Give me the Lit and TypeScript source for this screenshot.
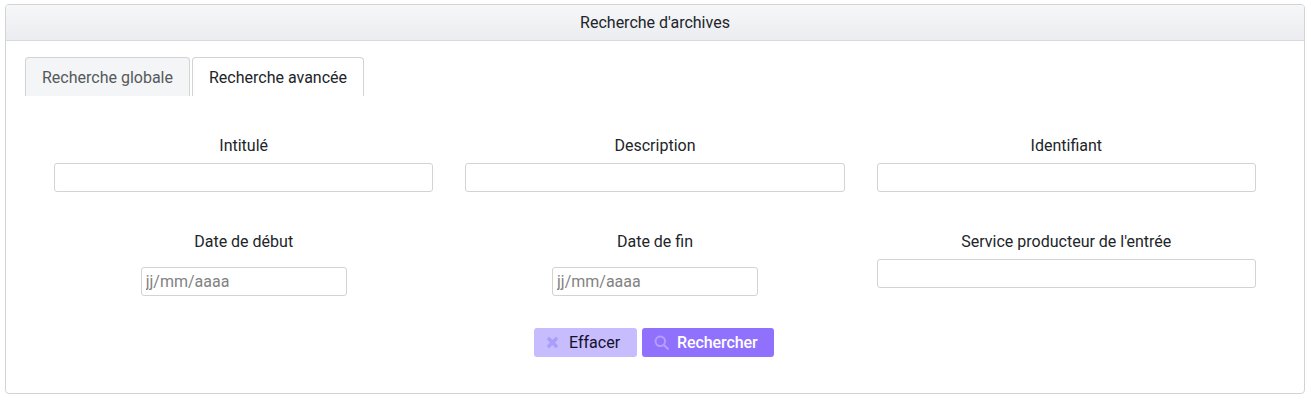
import { LitElement, html, css } from "lit";
import { customElement } from "lit/decorators.js";

@customElement("app-root")
export class AppRoot extends LitElement {
  static styles = css`
    :host { display: block; font-family: Roboto, "Liberation Sans", sans-serif; color: #212529; font-size: 16px; }
    * { box-sizing: border-box; }
    .page { padding: 4px 6px 7px 5px; height: 401px; }
    .panel { height: 390px; border: 1px solid #d3d3d3; border-radius: 4px; background: #fff; }
    .head { height: 36px; border-bottom: 1px solid #d9d9dc; background: linear-gradient(#f6f7f9, #ebecef); display: flex; align-items: center; justify-content: center; font-size: 16px; border-radius: 3px 3px 0 0; }
    .body { padding: 16px 19px 0; }
    .tabs { display: flex; gap: 2px; height: 39px; }
    .tab { height: 39px; border: 1px solid #d3d3d3; border-bottom: 0; border-radius: 4px 4px 0 0; display: flex; align-items: center; justify-content: center; font-size: 16px; }
    .tab.off { width: 165px; background: #f4f5f7; color: #55595c; }
    .tab.on { width: 172px; background: #fff; color: #212529; }
    .form { margin: 0 13px; }
    .row { display: grid; grid-template-columns: repeat(3, 1fr); }
    .r1 { padding-top: 39px; height: 134px; }
    .r2 { height: 98px; padding-top: 1px; }
    .cell { padding: 0 16px; display: flex; flex-direction: column; align-items: center; }
    label { display: block; font-size: 16px; line-height: 22px; height: 22px; text-align: center; }
    input { display: block; font: inherit; margin: 0; outline: 0; border: 1px solid #d3d3d3; border-radius: 3px; background: #fff; height: 29px; }
    .text { width: 100%; margin-top: 6px; }
    .date { width: 206px; margin-top: 14px; padding: 0 3px 0 4px; font-size: 16px; color: #828282; }
    .date::placeholder { color: #828282; opacity: 1; }
    .actions { display: flex; justify-content: center; gap: 5px; padding-right: 2px; }
    .btn { height: 29px; border: 0; border-radius: 3px; display: flex; align-items: center; font: inherit; font-size: 16px; padding: 0; }
    .clear { width: 103px; background: #c6bcfe; color: #14112a; padding-left: 13px; }
    .go { width: 132px; background: #8f71fe; color: #fff; font-weight: 500; padding-left: 12px; letter-spacing: -0.08px; }
    .clear svg { margin-right: 11px; }
    .go svg { margin-right: 8px; }
  `;

  render() {
    return html`
      <div class="page">
        <section class="panel">
          <header class="head">Recherche d'archives</header>
          <div class="body">
            <nav class="tabs">
              <div class="tab off">Recherche globale</div>
              <div class="tab on">Recherche avancée</div>
            </nav>
            <form class="form" @submit=${(e: Event) => e.preventDefault()}>
              <div class="row r1">
                <div class="cell"><label>Intitulé</label><input class="text" type="text" /></div>
                <div class="cell"><label>Description</label><input class="text" type="text" /></div>
                <div class="cell"><label>Identifiant</label><input class="text" type="text" /></div>
              </div>
              <div class="row r2">
                <div class="cell"><label>Date de début</label><input class="date" type="text" placeholder="jj/mm/aaaa" /></div>
                <div class="cell"><label>Date de fin</label><input class="date" type="text" placeholder="jj/mm/aaaa" /></div>
                <div class="cell"><label>Service producteur de l'entrée</label><input class="text" type="text" /></div>
              </div>
              <div class="actions">
                <button class="btn clear" type="button">
                  <svg width="11" height="11" viewBox="0 0 11 11"><path d="M2 2 9 9M9 2 2 9" stroke="#aa9dfb" stroke-width="3.6" stroke-linecap="round" fill="none" /></svg>
                  Effacer
                </button>
                <button class="btn go" type="button">
                  <svg width="15" height="15" viewBox="0 0 15 15"><circle cx="6.3" cy="6.3" r="4.8" stroke="#b3a0fe" stroke-width="2" fill="none" /><path d="M10 10 13.8 13.8" stroke="#b3a0fe" stroke-width="2.2" stroke-linecap="round" /></svg>
                  Rechercher
                </button>
              </div>
            </form>
          </div>
        </section>
      </div>
    `;
  }
}
